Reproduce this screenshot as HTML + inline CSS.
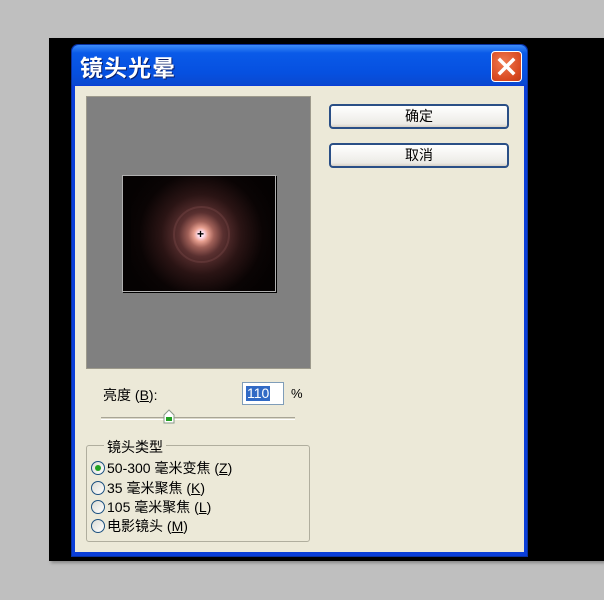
<!DOCTYPE html>
<html><head><meta charset="utf-8"><style>
*{margin:0;padding:0;box-sizing:border-box}
body{width:604px;height:600px;background:#bfbfbf;position:relative;overflow:hidden;font-family:"Liberation Sans","Noto Sans CJK SC",sans-serif;}
.abs{position:absolute}
.f{font-family:"Liberation Sans","Noto Sans CJK SC",sans-serif;font-size:13px;color:#000}
.btn{position:absolute;left:329px;width:180px;height:25px;border:2px solid #2a4f86;border-radius:4px;background:linear-gradient(#fff,#ecebe6 85%,#d6d0c5);text-align:center;line-height:21px;font-size:14px}
.radio{position:absolute;left:91px;width:14px;height:14px;border:1px solid #1c5180;border-radius:50%;background:linear-gradient(135deg,#dcdcd5,#fff)}
</style></head><body>
<div class="abs" style="left:49px;top:38px;width:555px;height:523px;background:#000;box-shadow:2px 2px 3px #888"></div>
<div class="abs" style="left:71px;top:44px;width:457px;height:513px;background:#0a3ed8;border-radius:7px 7px 0 0;border:1px solid #0831a0"></div>
<div class="abs" style="left:72px;top:45px;width:455px;height:40px;border-radius:7px 7px 0 0;background:linear-gradient(#3c8cf8,#0a5ae8 20%,#0650e0 70%,#0a48d0)"></div>
<div class="abs" style="left:80px;top:49px;font-size:23px;font-weight:bold;color:#fff;text-shadow:1px 1px 0 #0a1f6a;letter-spacing:1px;font-family:'Liberation Sans','Noto Sans CJK SC',sans-serif">镜头光晕</div>
<div class="abs" style="left:491px;top:51px;width:31px;height:31px;border:1px solid #fff;border-radius:4px;background:radial-gradient(circle at 40% 35%,#f07a50,#d84820 70%,#c03a18)"></div>
<svg class="abs" style="left:491px;top:51px" width="31" height="31"><path d="M9 9L22 22M22 9L9 22" stroke="#fff" stroke-width="3.5" stroke-linecap="square"/></svg>
<div class="abs" style="left:75px;top:86px;width:449px;height:466px;background:#ece9d8"></div>
<div class="abs" style="left:86px;top:96px;width:225px;height:273px;background:#808080;border:1px solid #9d9a8c"></div>
<div class="abs" style="left:122px;top:175px;width:154px;height:117px;background:#050202;border:1px solid #b0b0b0;box-shadow:1px 1px 0 #000;overflow:hidden">
<div class="abs" style="left:8px;top:0;width:140px;height:117px;background:radial-gradient(circle at 50% 50%,#fff 0,#fde 3px,#e8a090 7px,#a06058 13px,#5a3030 22px,#2a1414 40px,#0a0404 62px,#050202 80px)"></div>
<div class="abs" style="left:50px;top:30px;width:57px;height:57px;border-radius:50%;border:2px solid rgba(200,130,130,.15)"></div>
<div class="abs" style="left:74px;top:53px;font-size:12px;font-weight:bold;color:#000;line-height:10px">+</div>
</div>
<div class="btn f" style="top:104px">确定</div>
<div class="btn f" style="top:143px">取消</div>
<div class="abs f" style="left:103px;top:385px;font-size:14px">亮度 (<u>B</u>):</div>
<div class="abs" style="left:242px;top:382px;width:42px;height:23px;background:#fff;border:1px solid #7f9db9"></div>
<div class="abs f" style="left:246px;top:386px;background:#316ac5;color:#fff;font-size:14px;line-height:15px;padding:0 1px">110</div>
<div class="abs f" style="left:291px;top:386px;font-size:13px">%</div>
<div class="abs" style="left:101px;top:417px;width:194px;height:3px;border-top:1px solid #a8a596;border-bottom:1px solid #fff;background:#dcd9c9"></div>
<svg class="abs" style="left:163px;top:409px" width="12" height="15"><path d="M1 6L6 1L11 6V14H1Z" fill="#fff" stroke="#8a9a8a"/><path d="M3 8H9V12H3Z" fill="#21a121"/></svg>
<div class="abs" style="left:86px;top:445px;width:224px;height:97px;border:1px solid #b0ae9e;border-radius:3px"></div>
<div class="abs f" style="left:104px;top:437px;background:#ece9d8;padding:0 3px;font-size:14px">镜头类型</div>
<div class="radio" style="top:461px"></div><div class="abs" style="left:95px;top:465px;width:6px;height:6px;border-radius:50%;background:#21a121"></div>
<div class="radio" style="top:481px"></div>
<div class="radio" style="top:500px"></div>
<div class="radio" style="top:519px"></div>
<div class="abs f" style="left:107px;top:458px;font-size:14px">50-300 毫米变焦 (<u>Z</u>)</div>
<div class="abs f" style="left:107px;top:478px;font-size:14px">35 毫米聚焦 (<u>K</u>)</div>
<div class="abs f" style="left:107px;top:497px;font-size:14px">105 毫米聚焦 (<u>L</u>)</div>
<div class="abs f" style="left:107px;top:516px;font-size:14px">电影镜头 (<u>M</u>)</div>
</body></html>
